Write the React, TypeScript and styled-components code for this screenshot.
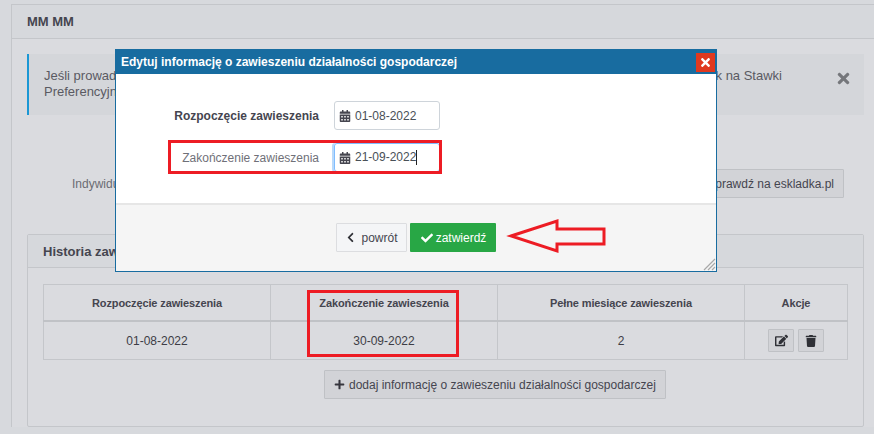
import React from "react";
import styled, { createGlobalStyle } from "styled-components";
import { FaCalendarAlt, FaTimes, FaChevronLeft, FaCheck, FaPlus, FaEdit, FaTrash } from "react-icons/fa";

const Global = createGlobalStyle`
  html, body { margin: 0; padding: 0; background: #d7d9dd; overflow: hidden; }
  body { font-family: "Liberation Sans", Arial, sans-serif; font-size: 13px; color: #45454f; }
  #root { width: 874px; height: 434px; overflow: hidden; position: relative; }
`;

const Page = styled.div`
  width: 874px;
  height: 434px;
  padding: 4px 0 0 11px;
  box-sizing: border-box;
  position: relative;
  overflow: hidden;
`;
const Panel = styled.section`
  width: 880px;
  background: #dadbdf;
  border: 1px solid #c4c6ca;
  border-right: none;
  border-bottom: none;
`;
const PanelHeader = styled.header`
  height: 33px;
  padding-left: 15px;
  display: flex;
  align-items: center;
  background: #d6d8dc;
  border-bottom: 1px solid #c4c6ca;
  font-weight: 700;
  font-size: 13px;
  color: #45454f;
`;
const PanelBody = styled.div`
  width: 837px;
  margin-left: 15px;
  padding-top: 15px;
`;
const Alert = styled.div`
  height: 61px;
  box-sizing: border-box;
  border-left: 2px solid #1b97d4;
  background: #d4d6da;
  padding: 14px 12px 0 15px;
  display: flex;
  font-size: 13px;
  line-height: 16px;
  color: #5a5a62;
`;
const AlertText = styled.div`
  width: 738px;
`;
const AlertLine = styled.div`
  display: flex;
  justify-content: space-between;
  white-space: nowrap;
`;
const AlertClose = styled.span`
  margin-left: 53px;
  margin-top: 2px;
  color: #75777b;
  font-size: 17px;
  line-height: 16px;
`;
const CheckRow = styled.div`
  height: 29px;
  margin-top: 54px;
  display: flex;
  align-items: center;
  justify-content: space-between;
  padding: 0 20px 0 45px;
  font-size: 12px;
  color: #6b6c73;
`;
const GreyButton = styled.button`
  height: 29px;
  padding: 0 9px;
  display: inline-flex;
  align-items: center;
  gap: 5px;
  background: #d2d3d7;
  border: 1px solid #bfc1c5;
  border-radius: 1px;
  font: 12px "Liberation Sans", Arial, sans-serif;
  color: #45454f;
  white-space: nowrap;
`;
const HistoryPanel = styled.section`
  margin-top: 36px;
  height: 193px;
  box-sizing: border-box;
  border: 1px solid #c4c6ca;
  border-radius: 2px;
`;
const HistoryHeader = styled.header`
  height: 33px;
  box-sizing: border-box;
  padding-left: 15px;
  display: flex;
  align-items: center;
  background: #d6d8dc;
  border-bottom: 1px solid #c4c6ca;
  font-weight: 700;
  font-size: 13px;
  color: #45454f;
`;
const HistoryBody = styled.div`
  padding: 16px 15px 0;
  display: flex;
  flex-direction: column;
`;
const Table = styled.table`
  width: 804px;
  border-collapse: collapse;
  table-layout: fixed;
  text-align: center;
`;
const Th = styled.th`
  height: 35px;
  padding: 0;
  border: 1px solid #c4c6ca;
  border-bottom: 2px solid #c0c2c6;
  font-size: 11px;
  font-weight: 700;
  letter-spacing: -0.12px;
  color: #45454f;
`;
const Td = styled.td`
  height: 37px;
  padding: 0;
  border: 1px solid #c4c6ca;
  font-size: 12px;
  color: #3d3d46;
`;
const Actions = styled.div`
  display: flex;
  justify-content: center;
  gap: 4px;
`;
const ActionButton = styled.button<{ $size: number }>`
  width: 26px;
  height: 23px;
  padding: 0;
  display: flex;
  align-items: center;
  justify-content: center;
  background: #d2d3d7;
  border: 1px solid #bfc1c5;
  border-radius: 1px;
  color: #2f3036;
  font-size: ${(p) => p.$size}px;
`;
const AddRow = styled.div`
  margin-top: 10px;
  padding-left: 281px;
`;
const AddButton = styled(GreyButton)`
  padding: 0 9px;
  gap: 4px;
  font-size: 12px;
  svg { font-size: 11px; color: #36363e; }
`;
const Modal = styled.div`
  position: absolute;
  left: 115px;
  top: 49px;
  width: 602px;
  height: 223px;
  box-sizing: border-box;
  border: 1px solid #186ca0;
  background: #fff;
  display: flex;
  flex-direction: column;
`;
const ModalTitle = styled.div`
  height: 24px;
  flex: none;
  background: #186ca0;
  display: flex;
  align-items: center;
  justify-content: space-between;
  padding: 0 1px 0 5px;
  color: #fff;
  font-weight: 700;
  font-size: 12px;
`;
const ModalClose = styled.button`
  width: 19px;
  height: 19px;
  padding: 0;
  border: none;
  background: #e0391f;
  color: #fff;
  display: flex;
  align-items: center;
  justify-content: center;
  font-size: 13px;
`;
const ModalBody = styled.div`
  height: 129px;
  flex: none;
  box-sizing: border-box;
  padding-top: 27px;
  display: flex;
  flex-direction: column;
  gap: 13px;
`;
const FormRow = styled.div`
  display: flex;
  align-items: center;
  height: 29px;
`;
const Label = styled.label<{ $strong?: boolean }>`
  width: 203px;
  text-align: right;
  margin-right: 15px;
  font-size: 12px;
  white-space: nowrap;
  font-weight: ${(p) => (p.$strong ? 700 : 400)};
  color: ${(p) => (p.$strong ? "#45454f" : "#6f7078")};
`;
const DateField = styled.div<{ $focused?: boolean }>`
  width: 106px;
  height: 29px;
  box-sizing: border-box;
  display: flex;
  align-items: center;
  gap: 4px;
  padding-left: 4px;
  border: 1px solid ${(p) => (p.$focused ? "#80bdff" : "#ced4da")};
  border-radius: 3px;
  box-shadow: ${(p) => (p.$focused ? "-2px 0 0 #b8d9fb" : "none")};
  font-size: 12px;
  color: #495057;
  svg { font-size: 12px; color: #45454f; }
`;
const Caret = styled.span`
  display: inline-block;
  width: 1px;
  height: 15px;
  background: #222;
  vertical-align: middle;
`;
const ModalFooter = styled.div`
  flex: 1;
  background: #f5f5f5;
  border-top: 2px solid #e6e6e6;
  display: flex;
  justify-content: center;
  padding-top: 18px;
  gap: 3px;
  position: relative;
`;
const BackButton = styled.button`
  width: 71px;
  height: 29px;
  padding: 0;
  display: flex;
  align-items: center;
  justify-content: center;
  gap: 5px;
  background: #f4f5f7;
  border: 1px solid #dcdde0;
  border-radius: 1px;
  font: 12px "Liberation Sans", Arial, sans-serif;
  color: #45454f;
  svg { font-size: 11px; color: #2f3036; }
`;
const ConfirmButton = styled.button`
  width: 86px;
  height: 29px;
  padding: 0 0 0 1px;
  display: flex;
  align-items: center;
  justify-content: center;
  gap: 3px;
  background: #28a745;
  border: none;
  border-radius: 1px;
  font: 12px "Liberation Sans", Arial, sans-serif;
  color: #fff;
  svg { font-size: 12px; }
`;
const ResizeGrip = styled.svg`
  position: absolute;
  right: 0;
  bottom: 0;
  width: 14px;
  height: 14px;
`;
const Highlight = styled.div<{ $x: number; $y: number; $w: number; $h: number }>`
  position: absolute;
  left: ${(p) => p.$x}px;
  top: ${(p) => p.$y}px;
  width: ${(p) => p.$w}px;
  height: ${(p) => p.$h}px;
  box-sizing: border-box;
  border: 3px solid #ed1c24;
  pointer-events: none;
`;
const Arrow = styled.svg`
  position: absolute;
  left: 505px;
  top: 215px;
  width: 105px;
  height: 42px;
`;

export default function App() {
  return (
    <Page>
      <Global />
      <Panel>
        <PanelHeader>MM MM</PanelHeader>
        <PanelBody>
          <Alert>
            <AlertText>
              <AlertLine>
                <span>Jeśli prowadzisz działalność gospodarczą</span>
                <span>składek na Stawki</span>
              </AlertLine>
              <AlertLine>
                <span>Preferencyjne</span>
              </AlertLine>
            </AlertText>
            <AlertClose><FaTimes /></AlertClose>
          </Alert>
          <CheckRow>
            <span>Indywidualne konto składkowe</span>
            <GreyButton>Sprawdź na eskladka.pl</GreyButton>
          </CheckRow>
          <HistoryPanel>
            <HistoryHeader>Historia zawieszeń</HistoryHeader>
            <HistoryBody>
              <Table>
                <colgroup>
                  <col style={{ width: 227 }} />
                  <col style={{ width: 227 }} />
                  <col style={{ width: 247 }} />
                  <col style={{ width: 103 }} />
                </colgroup>
                <thead>
                  <tr>
                    <Th>Rozpoczęcie zawieszenia</Th>
                    <Th>Zakończenie zawieszenia</Th>
                    <Th>Pełne miesiące zawieszenia</Th>
                    <Th>Akcje</Th>
                  </tr>
                </thead>
                <tbody>
                  <tr>
                    <Td>01-08-2022</Td>
                    <Td>30-09-2022</Td>
                    <Td>2</Td>
                    <Td>
                      <Actions>
                        <ActionButton $size={13} aria-label="edytuj"><FaEdit /></ActionButton>
                        <ActionButton $size={12} aria-label="usuń"><FaTrash /></ActionButton>
                      </Actions>
                    </Td>
                  </tr>
                </tbody>
              </Table>
              <AddRow>
                <AddButton><FaPlus /> dodaj informację o zawieszeniu działalności gospodarczej</AddButton>
              </AddRow>
            </HistoryBody>
          </HistoryPanel>
        </PanelBody>
      </Panel>

      <Highlight $x={307} $y={290} $w={152} $h={67} />

      <Modal>
        <ModalTitle>
          <span>Edytuj informację o zawieszeniu działalności gospodarczej</span>
          <ModalClose aria-label="zamknij"><FaTimes /></ModalClose>
        </ModalTitle>
        <ModalBody>
          <FormRow>
            <Label $strong>Rozpoczęcie zawieszenia</Label>
            <DateField><FaCalendarAlt /><span>01-08-2022</span></DateField>
          </FormRow>
          <FormRow>
            <Label>Zakończenie zawieszenia</Label>
            <DateField $focused><FaCalendarAlt /><span>21-09-2022<Caret /></span></DateField>
          </FormRow>
        </ModalBody>
        <ModalFooter>
          <BackButton><FaChevronLeft /> powrót</BackButton>
          <ConfirmButton><FaCheck /> zatwierdź</ConfirmButton>
          <ResizeGrip viewBox="0 0 14 14">
            <path d="M2 13 L13 2 M6 13 L13 6 M10 13 L13 10" stroke="#a9a9a9" strokeWidth="1.2" fill="none" />
          </ResizeGrip>
        </ModalFooter>
      </Modal>

      <Highlight $x={168} $y={140} $w={274} $h={34} />

      <Arrow viewBox="505 215 105 42">
        <path d="M511 236 L557 221 L557 229 L604 229 L604 244 L557 244 L557 251 Z" fill="none" stroke="#ed1c24" strokeWidth="3" />
      </Arrow>
    </Page>
  );
}
